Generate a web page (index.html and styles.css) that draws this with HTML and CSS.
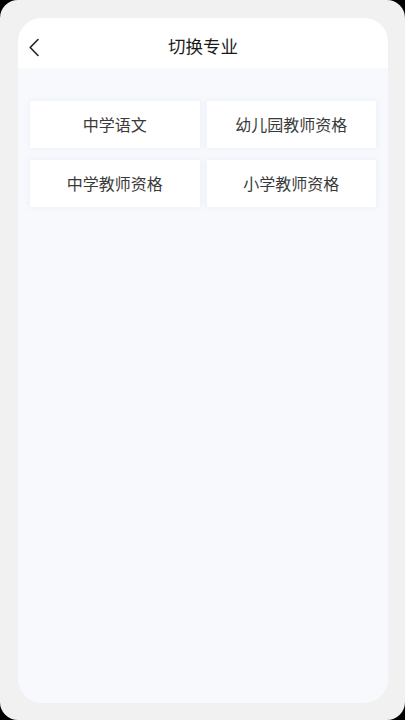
FILE: index.html
```html
<!DOCTYPE html>
<html lang="zh">
<head>
<meta charset="utf-8">
<title>切换专业</title>
<link rel="stylesheet" href="styles.css">
</head>
<body>
<div class="screen">
  <div class="phone">
    <header class="header">
      <span class="back">
        <svg width="12" height="19" viewBox="0 0 12 19"><path d="M10 1.5 L2.2 9.5 L10 17.5" fill="none" stroke="#222" stroke-width="1.6" stroke-linecap="round" stroke-linejoin="round"/></svg>
      </span>
      <h1 class="title">切换专业</h1>
    </header>
    <main class="content">
      <div class="grid">
        <div class="card">中学语文</div>
        <div class="card">幼儿园教师资格</div>
        <div class="card">中学教师资格</div>
        <div class="card">小学教师资格</div>
      </div>
    </main>
  </div>
</div>
</body>
</html>
```
FILE: styles.css
```css
html, body {
  margin: 0;
  padding: 0;
  background: #000;
}
body {
  font-family: "Noto Sans CJK SC", "Noto Sans", sans-serif;
}
.screen {
  width: 405px;
  height: 720px;
  box-sizing: border-box;
  background: #f1f1f1;
  border-radius: 18px;
  padding: 18px 17px 17px 18px;
}
.phone {
  width: 370px;
  height: 685px;
  border-radius: 24px;
  overflow: hidden;
  background: #f8f9fd;
  display: flex;
  flex-direction: column;
}
.header {
  height: 50px;
  flex: none;
  background: #fff;
  display: flex;
  align-items: center;
  justify-content: center;
  position: relative;
}
.back {
  position: absolute;
  left: 10px;
  top: 20px;
  width: 12px;
  height: 19px;
  display: flex;
}
.title {
  margin: 0;
  font-size: 17.5px;
  font-weight: 400;
  color: #1a1a1a;
  line-height: 1;
  padding-top: 6px;
}
.content {
  flex: 1;
  padding: 33px 12px 0 12px;
}
.grid {
  display: grid;
  grid-template-columns: 1fr 1fr;
  column-gap: 7px;
  row-gap: 12px;
}
.card {
  height: 47px;
  background: #fff;
  box-shadow: 0 0 6px rgba(200, 215, 240, 0.35);
  display: flex;
  align-items: center;
  justify-content: center;
  font-size: 16px;
  color: #3a3a3a;
  padding-bottom: 1px;
  box-sizing: border-box;
}
```
